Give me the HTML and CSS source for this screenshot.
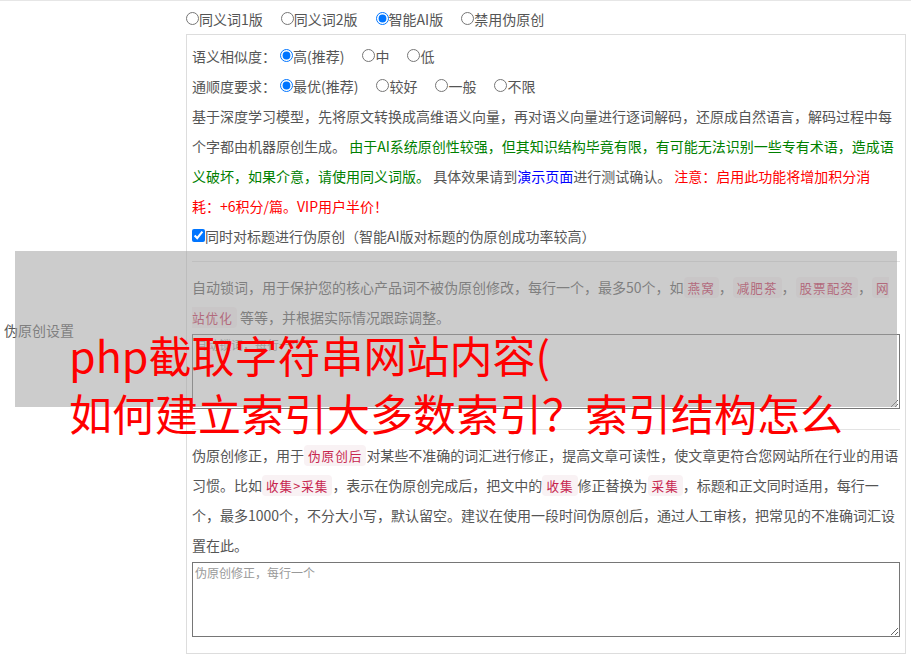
FILE: index.html
```html
<!DOCTYPE html>
<html lang="zh-CN">
<head>
<meta charset="utf-8">
<title>伪原创设置</title>
<link rel="stylesheet" href="styles.css">
</head>
<body>
<div class="page">
  <div class="side">伪原创设置</div>
  <div class="main">
    <div class="modes"><label class="opt"><input type="radio" name="mode">同义词1版</label><label class="opt"><input type="radio" name="mode">同义词2版</label><label class="opt"><input type="radio" name="mode" checked>智能AI版</label><label class="opt"><input type="radio" name="mode">禁用伪原创</label></div>
    <div class="box">
      <div class="row"><span class="lbl">语义相似度：</span><label class="opt"><input type="radio" name="sim" checked>高(推荐)</label><label class="opt"><input type="radio" name="sim">中</label><label class="opt"><input type="radio" name="sim">低</label></div>
      <div class="row"><span class="lbl">通顺度要求：</span><label class="opt"><input type="radio" name="flu" checked>最优(推荐)</label><label class="opt"><input type="radio" name="flu">较好</label><label class="opt"><input type="radio" name="flu">一般</label><label class="opt"><input type="radio" name="flu">不限</label></div>
      <p class="desc">基于深度学习模型，先将原文转换成高维语义向量，再对语义向量进行逐词解码，还原成自然语言，解码过程中每个字都由机器原创生成。 <span class="green">由于AI系统原创性较强，但其知识结构毕竟有限，有可能无法识别一些专有术语，造成语义破坏，如果介意，请使用同义词版。</span> 具体效果请到<a class="blue" href="#">演示页面</a>进行测试确认。 <span class="red">注意：启用此功能将增加积分消<span class="nw">耗：+6积分</span>/篇。VIP用户半价！</span></p>
      <div class="row"><label class="chk"><input type="checkbox" checked>同时对标题进行伪原创（智能AI版对标题的伪原创成功率较高）</label></div>
      <div class="sep"></div>
      <p class="desc">自动锁词，用于保护您的核心产品词不被伪原创修改，每行一个，最多50个，如<code class="kw">燕窝</code>，<code class="kw">减肥茶</code>，<code class="kw">股票配资</code>，<code class="kw">网站优化</code> 等等，并根据实际情况跟踪调整。</p>
      <textarea class="area" placeholder="自动锁词，每行一个"></textarea>
      <div class="sep wide"></div>
      <p class="desc">伪原创修正，用于<code class="kw">伪原创后</code>对某些不准确的词汇进行修正，提高文章可读性，使文章更符合您网站所在行业的用语习惯。比如<code class="kw">收集&gt;采集</code>，表示在伪原创完成后，把文中的<code class="kw">收集</code>修正替换为<code class="kw">采集</code>，标题和正文同时适用，每行一个，最多1000个，不分大小写，默认留空。建议在使用一段时间伪原创后，通过人工审核，把常见的不准确词汇设置在此。</p>
      <textarea class="area" placeholder="伪原创修正，每行一个"></textarea>
    </div>
  </div>
</div>
<div class="mask"></div>
<h1 class="title">php截取字符串网站内容(<br>如何建立索引大多数索引？索引结构怎么</h1>
</body>
</html>
```

FILE: styles.css
```css
html, body {
  margin: 0;
  padding: 0;
}

body {
  font-family: "Noto Sans CJK SC", "Microsoft YaHei", sans-serif;
  font-size: 14px;
  color: #555;
  background: #fff;
}

.page {
  display: grid;
  grid-template-columns: 186px 1fr;
  align-items: center;
  border-top: 1px solid #e6e6e6;
}

.side {
  padding-left: 4px;
}

.main {
  padding: 3px 5px 5px 0;
}

.modes {
  height: 30px;
  line-height: 30px;
  white-space: nowrap;
}

.opt {
  margin-right: 18px;
}

.opt input,
.chk input {
  margin: 0;
}

.chk input {
  margin-bottom: 1px;
}

.lbl {
  margin-right: 4px;
}

.box {
  border: 1px solid #ddd;
  padding: 6px 5px 16px;
}

.row {
  line-height: 30px;
  white-space: nowrap;
}

.desc {
  margin: 0;
  line-height: 30px;
}

.nw {
  white-space: nowrap;
}

.green {
  color: #008000;
}

.blue {
  color: #0000ff;
  text-decoration: none;
}

.red {
  color: #ff0000;
}

.kw {
  font-family: inherit;
  font-size: 90%;
  line-height: 1;
  color: #c7254e;
  background: #f9f2f4;
  padding: 1px 4px;
  border-radius: 4px;
  letter-spacing: 1px;
}

.sep {
  border-top: 1px solid #e3e3e3;
  margin: 10px 0;
}

.sep.wide {
  margin-top: 20px;
}

.area {
  display: block;
  box-sizing: border-box;
  width: 100%;
  height: 75px;
  margin: 2px 0 0;
  padding: 2px;
  border: 1px solid #767676;
  border-radius: 0;
  font-family: "Noto Sans CJK SC", sans-serif;
  font-size: 12px;
  line-height: 16px;
  color: #555;
  background: #fff;
}

.area::placeholder {
  color: #999;
}

.mask {
  position: absolute;
  left: 15px;
  top: 251px;
  width: 882px;
  height: 156px;
  background: rgba(163, 163, 163, 0.55);
}

.title {
  position: absolute;
  left: 69px;
  top: 325px;
  margin: 0;
  font-family: "Noto Sans CJK SC", "Microsoft YaHei", sans-serif;
  font-size: 43px;
  line-height: 58px;
  font-weight: normal;
  color: #ff0000;
  white-space: nowrap;
}
```
